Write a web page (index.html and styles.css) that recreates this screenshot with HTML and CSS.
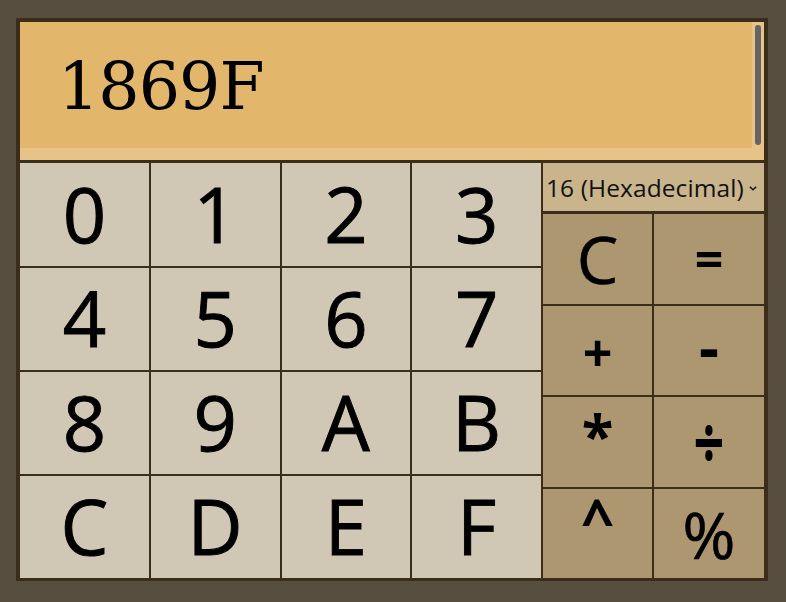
FILE: index.html
```html
<!DOCTYPE html>
<html>
<head>
<meta charset="utf-8">
<link rel="stylesheet" href="styles.css">
</head>
<body>
<div class="calc">
  <div class="display">
    <div class="screen">1869F</div>
    <div class="track"><div class="thumb"></div></div>
  </div>
  <div class="pad">
    <div class="digits">
      <button class="key">0</button><button class="key">1</button><button class="key">2</button><button class="key">3</button>
      <button class="key">4</button><button class="key">5</button><button class="key">6</button><button class="key">7</button>
      <button class="key">8</button><button class="key">9</button><button class="key">A</button><button class="key">B</button>
      <button class="key">C</button><button class="key">D</button><button class="key">E</button><button class="key">F</button>
    </div>
    <div class="side">
      <div class="base">
        <span class="base-label">16 (Hexadecimal)</span>
        <svg class="chev" width="8" height="5" viewBox="0 0 8 5"><path d="M0.8 0.8 L4 3.8 L7.2 0.8" fill="none" stroke="#111" stroke-width="1.4"/></svg>
      </div>
      <div class="ops">
        <button class="op">C</button><button class="op op-eq">=</button>
        <button class="op op-plus">+</button><button class="op op-minus">-</button>
        <button class="op op-star">*</button><button class="op op-div"><span class="div-glyph">÷</span></button>
        <button class="op op-caret">^</button><button class="op op-pct">%</button>
      </div>
    </div>
  </div>
</div>
</body>
</html>
```

FILE: styles.css
```css
* { box-sizing: border-box; }
html, body { margin: 0; padding: 0; }
body {
  background: #574e3f;
  width: 786px;
  height: 602px;
  padding: 18px 0 0 16px;
}
.calc {
  width: 752px;
  height: 563px;
  border: 4px solid #3a2e1a;
  border-bottom-width: 3px;
  background: #3a2e1a;
  display: flex;
  flex-direction: column;
}
.display {
  height: 138px;
  background: #e8c387;
  display: flex;
  flex-shrink: 0;
}
.screen {
  flex: 1;
  height: 126px;
  background: #e3b76b;
  font-family: "DejaVu Serif", serif;
  font-size: 65px;
  letter-spacing: -1px;
  line-height: 1;
  color: #000;
  display: flex;
  align-items: center;
  padding-left: 38px;
  padding-top: 3px;
}
.track {
  width: 12px;
  padding: 3px 0 0 3px;
}
.thumb {
  width: 6px;
  height: 120px;
  border-radius: 3px;
  background: #646464;
}
.pad {
  margin-top: 3px;
  flex: 1;
  display: grid;
  grid-template-columns: 521px 221px;
  column-gap: 2px;
}
.digits {
  display: grid;
  grid-template-columns: repeat(4, 1fr);
  grid-template-rows: 103px 102px 102px 102px;
  gap: 2px;
}
.key, .op {
  border: 0;
  margin: 0;
  padding: 0;
  font-family: "Open Sans", "Noto Sans", sans-serif;
  color: #000;
  display: flex;
  align-items: center;
  justify-content: center;
  line-height: 1;
}
.key {
  background: #d1c7b5;
  font-size: 76px;
  -webkit-text-stroke: 0.9px #000;
  padding-bottom: 2px;
}
.side {
  display: flex;
  flex-direction: column;
}
.base {
  height: 48px;
  background: #c9b48c;
  display: flex;
  align-items: center;
  padding-left: 3px;
  gap: 5px;
  flex-shrink: 0;
}
.base-label {
  font-family: "Open Sans", "Noto Sans", sans-serif;
  font-size: 24.5px;
  color: #111;
  letter-spacing: 0.1px;
  white-space: nowrap;
}
.chev { margin-top: 2px; }
.ops {
  margin-top: 3px;
  flex: 1;
  display: grid;
  grid-template-columns: 109px 110px;
  grid-template-rows: repeat(4, 1fr);
  gap: 2px;
}
.op {
  background: #ad9770;
  font-size: 66px;
  -webkit-text-stroke: 0.6px #000;
  padding-bottom: 2px;
}
.op-eq { font-size: 50px; font-weight: 700; -webkit-text-stroke: 0; }
.op-plus { font-size: 52px; font-weight: 700; -webkit-text-stroke: 0; padding-top: 6px; }
.op-minus { font-size: 62px; font-weight: 700; -webkit-text-stroke: 0; padding-bottom: 8px; }
.op-star { font-size: 58px; font-weight: 700; -webkit-text-stroke: 0; padding-bottom: 14px; }
.op-div { font-size: 54px; font-weight: 700; -webkit-text-stroke: 0; padding-bottom: 2px; }
.div-glyph { display: inline-block; transform: scaleY(1.35); }
.op-caret { font-size: 58px; font-weight: 700; -webkit-text-stroke: 0; padding-bottom: 28px; }
.op-pct { font-size: 64px; padding-top: 6px; }
```
